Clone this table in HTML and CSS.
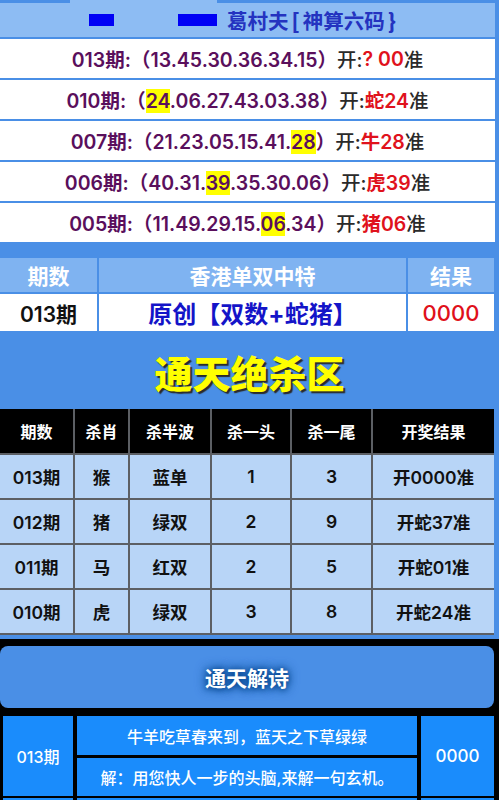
FILE: index.html
```html
<!DOCTYPE html>
<html lang="zh">
<head>
<meta charset="utf-8">
<link rel="stylesheet" href="styles.css">
</head>
<body>
<div class="page">
  <div class="topstrip"><span class="ts-a"></span><span class="ts-b"></span><span class="ts-c"></span></div>
  <div class="header">
    <span class="redact r1"></span>
    <span class="redact r2"></span>
    <span class="title">葛村夫<span class="br">[</span>神算六码<span class="br">}</span></span>
  </div>
  <div class="results">
    <div class="row"><span class="p">013期:（13.45.30.36.34.15）</span><span class="k">开:</span><span class="r">?&nbsp;00</span><span class="k">准</span></div>
    <div class="row"><span class="p">010期:（<mark>24</mark>.06.27.43.03.38）</span><span class="k">开:</span><span class="r">蛇24</span><span class="k">准</span></div>
    <div class="row"><span class="p">007期:（21.23.05.15.41.<mark>28</mark>）</span><span class="k">开:</span><span class="r">牛28</span><span class="k">准</span></div>
    <div class="row"><span class="p">006期:（40.31.<mark>39</mark>.35.30.06）</span><span class="k">开:</span><span class="r">虎39</span><span class="k">准</span></div>
    <div class="row last"><span class="p">005期:（11.49.29.15.<mark>06</mark>.34）</span><span class="k">开:</span><span class="r">猪06</span><span class="k">准</span></div>
  </div>
  <div class="special">
    <div class="sp-h">期数</div>
    <div class="sp-h">香港单双中特</div>
    <div class="sp-h">结果</div>
    <div class="sp-c black">013期</div>
    <div class="sp-c blue">原创【双数+蛇猪】</div>
    <div class="sp-c red">0000</div>
  </div>
  <div class="kill-title">通天绝杀区</div>
  <div class="kill">
    <div class="kh">期数</div><div class="kh">杀肖</div><div class="kh">杀半波</div><div class="kh">杀一头</div><div class="kh">杀一尾</div><div class="kh">开奖结果</div>
    <div class="kc">013期</div><div class="kc">猴</div><div class="kc">蓝单</div><div class="kc">1</div><div class="kc">3</div><div class="kc">开0000准</div>
    <div class="kc">012期</div><div class="kc">猪</div><div class="kc">绿双</div><div class="kc">2</div><div class="kc">9</div><div class="kc">开蛇37准</div>
    <div class="kc">011期</div><div class="kc">马</div><div class="kc">红双</div><div class="kc">2</div><div class="kc">5</div><div class="kc">开蛇01准</div>
    <div class="kc">010期</div><div class="kc">虎</div><div class="kc">绿双</div><div class="kc">3</div><div class="kc">8</div><div class="kc">开蛇24准</div>
  </div>
  <div class="poem-sec">
    <div class="poem-title"><span>通天解诗</span></div>
    <div class="poem">
      <div class="pc pid">013期</div>
      <div class="pc pl1">牛羊吃草春来到，蓝天之下草绿绿</div>
      <div class="pc pres">0000</div>
      <div class="pc pl2">解：用您快人一步的头脑,来解一句玄机。</div>
    </div>
    <div class="poem next">
      <div class="pc pid"></div>
      <div class="pc pl1"></div>
      <div class="pc pres"></div>
    </div>
  </div>
</div>
</body>
</html>
```
FILE: styles.css
```css
* { box-sizing: border-box; margin: 0; padding: 0; }
html, body { width: 499px; height: 800px; overflow: hidden; }
body {
  background: #4a8fe6;
  font-family: Inter, "Noto Sans CJK SC", sans-serif;
}
.page { width: 499px; }

.topstrip { display: flex; height: 3px; }
.ts-a { width: 70px; background: #4a8fe6; }
.ts-b { width: 147px; background: #8dbcf3; }
.ts-c { flex: 1; background: #4a8fe6; }

.header {
  width: 495px;
  height: 36px;
  background: #8dbcf3;
  border-bottom: 2px solid #4a8fe6;
  display: flex;
  align-items: center;
  padding-left: 89px;
}
.redact { display: block; height: 12px; background: #0000f5; }
.r1 { width: 25px; margin-right: 64px; }
.r2 { width: 39px; margin-right: 10px; }
.title {
  color: #2433c0;
  font-family: "Noto Sans CJK SC", sans-serif;
  font-size: 20.5px;
  font-weight: 700;
  line-height: 1;
}
.br { padding: 0 3px; font-weight: 900; }

.results { width: 495px; background: #fff; }
.row {
  height: 41px;
  border-bottom: 2px solid #4a8fe6;
  display: flex;
  align-items: center;
  justify-content: center;
  font-size: 19.5px;
  font-weight: 600;
  white-space: nowrap;
}
.row.last { border-bottom-width: 4px; height: 43px; }
.p { color: #5a0f5c; }
.k { color: #2a2a2a; font-weight: 500; }
.r { color: #e0121c; font-weight: 600; }
mark { background: #ffff00; color: inherit; }

.special {
  margin-top: 12px;
  width: 494px;
  display: grid;
  grid-template-columns: 97px 307px 86px;
  gap: 2px;
  background: #4a8fe6;
}
.sp-h {
  height: 34px;
  background: #7fb3f1;
  color: #fff;
  font-size: 21px;
  font-weight: 700;
  display: flex; align-items: center; justify-content: center;
}
.sp-c {
  height: 37px;
  background: #fff;
  font-size: 21px;
  font-weight: 600;
  display: flex; align-items: center; justify-content: center;
}
.black { color: #111; }
.blue { color: #1414c8; font-size: 24px; font-weight: 700; }
.red { color: #e0101a; font-size: 22px; font-weight: 500; }

.kill-title {
  height: 78px;
  display: flex; align-items: center; justify-content: center;
  color: #ffff00;
  font-family: "Noto Sans CJK SC", sans-serif;
  font-size: 38px;
  font-weight: 900;
  text-shadow: 2px 2px 1px #2a2a2a;
  padding-top: 2px;
}

.kill {
  width: 494px;
  display: grid;
  grid-template-columns: 73px 53px 80px 78px 79px 121px;
  grid-auto-rows: 43px;
  grid-template-rows: 44px;
  gap: 2px;
  background: #5c5f64;
  border-bottom: 2px solid #5c5f64;
}
.kh {
  background: #000;
  color: #fff;
  font-family: "Noto Sans CJK SC", sans-serif;
  font-size: 16px;
  font-weight: 700;
  display: flex; align-items: center; justify-content: center;
}
.kc {
  background: #b8d5f7;
  color: #111;
  font-size: 17.5px;
  font-weight: 600;
  display: flex; align-items: center; justify-content: center;
}

.poem-sec {
  margin-top: 4px;
  background: #000;
  padding-top: 7px;
  height: 200px;
}
.poem-title {
  width: 494px;
  height: 62px;
  background: #4a8fe6;
  border-radius: 8px;
  display: flex; align-items: center; justify-content: center;
}
.poem-title span {
  color: #fff;
  font-family: "Noto Sans CJK SC", sans-serif;
  font-size: 21px;
  font-weight: 700;
  text-shadow: 0 1px 5px #0b4c96, 0 0 9px #0b4c96, 0 0 12px #0b4c96;
}
.poem {
  margin-top: 8px;
  padding-left: 3px;
  width: 494px;
  display: grid;
  grid-template-columns: 70px 340px 73px;
  grid-template-rows: 39px 38px;
  column-gap: 4px;
  row-gap: 3px;
}
.pc {
  background: #1a8cfc;
  color: #fff;
  font-size: 16px;
  font-weight: 500;
  display: flex; align-items: center; justify-content: center;
}
.pid { grid-row: 1 / 3; }
.pres { grid-row: 1 / 3; grid-column: 3; font-size: 17px; }
.pl2 { grid-column: 2; }
.next { margin-top: 2px; grid-template-rows: 39px; }
```
